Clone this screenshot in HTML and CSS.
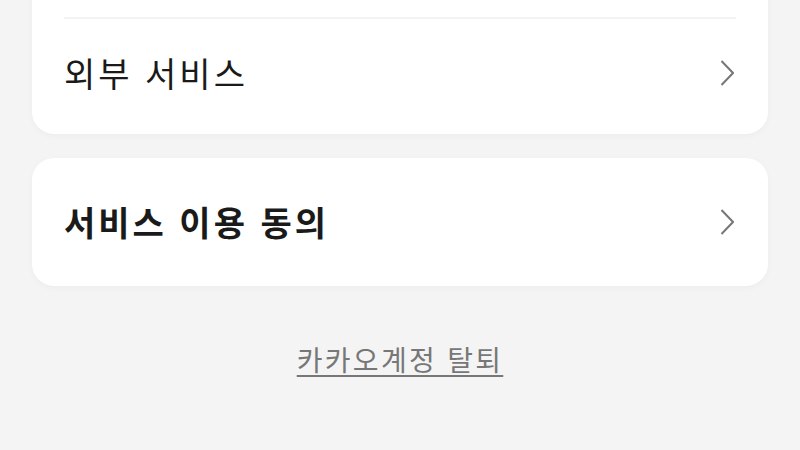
FILE: index.html
```html
<!DOCTYPE html>
<html lang="ko">
<head>
<meta charset="utf-8">
<link rel="stylesheet" href="styles.css">
</head>
<body>
<main class="page">
  <section class="card card-first">
    <div class="row row-divided">
      <span class="label">외부 서비스</span>
      <svg class="chev" width="14" height="26" viewBox="0 0 14 26"><path d="M1.5 1 L13 13 L1.5 25" fill="none" stroke="#777" stroke-width="2"/></svg>
    </div>
  </section>
  <section class="card">
    <div class="row row-tall">
      <span class="label label-bold">서비스 이용 동의</span>
      <svg class="chev" width="14" height="26" viewBox="0 0 14 26"><path d="M1.5 1 L13 13 L1.5 25" fill="none" stroke="#777" stroke-width="2"/></svg>
    </div>
  </section>
  <div class="footer">
    <a class="leave" href="#">카카오계정 탈퇴</a>
  </div>
</main>
</body>
</html>
```
FILE: styles.css
```css
html, body {
  margin: 0;
  padding: 0;
  background: #f4f4f4;
  font-family: "Noto Sans CJK KR", "Noto Sans", sans-serif;
  color: #1a1a1a;
}
.page {
  display: flex;
  flex-direction: column;
  gap: 24px;
  padding: 0 32px;
  height: 450px;
  overflow: hidden;
}
.card {
  background: #fff;
  border-radius: 22px;
  padding: 0 32px;
  box-shadow: 0 2px 6px rgba(0, 0, 0, 0.03);
}
.card-first {
  margin-top: -40px;
  padding-top: 40px;
  padding-bottom: 8px;
}
.row {
  display: flex;
  align-items: center;
  justify-content: space-between;
}
.row-divided {
  border-top: 2px solid #f3f3f3;
  margin-top: 17px;
  height: 107px;
}
.row-tall {
  height: 128px;
}
.label {
  font-size: 34px;
  font-weight: 400;
  line-height: 1;
  letter-spacing: 3px;
}
.label-bold {
  font-weight: 700;
}
.chev {
  display: block;
  margin-right: 2px;
}
.footer {
  display: flex;
  justify-content: center;
  padding-top: 29px;
}
.leave {
  font-size: 28px;
  color: #777;
  letter-spacing: 2.3px;
  text-decoration: underline;
  text-underline-offset: 4px;
  text-decoration-thickness: 2px;
}
```
